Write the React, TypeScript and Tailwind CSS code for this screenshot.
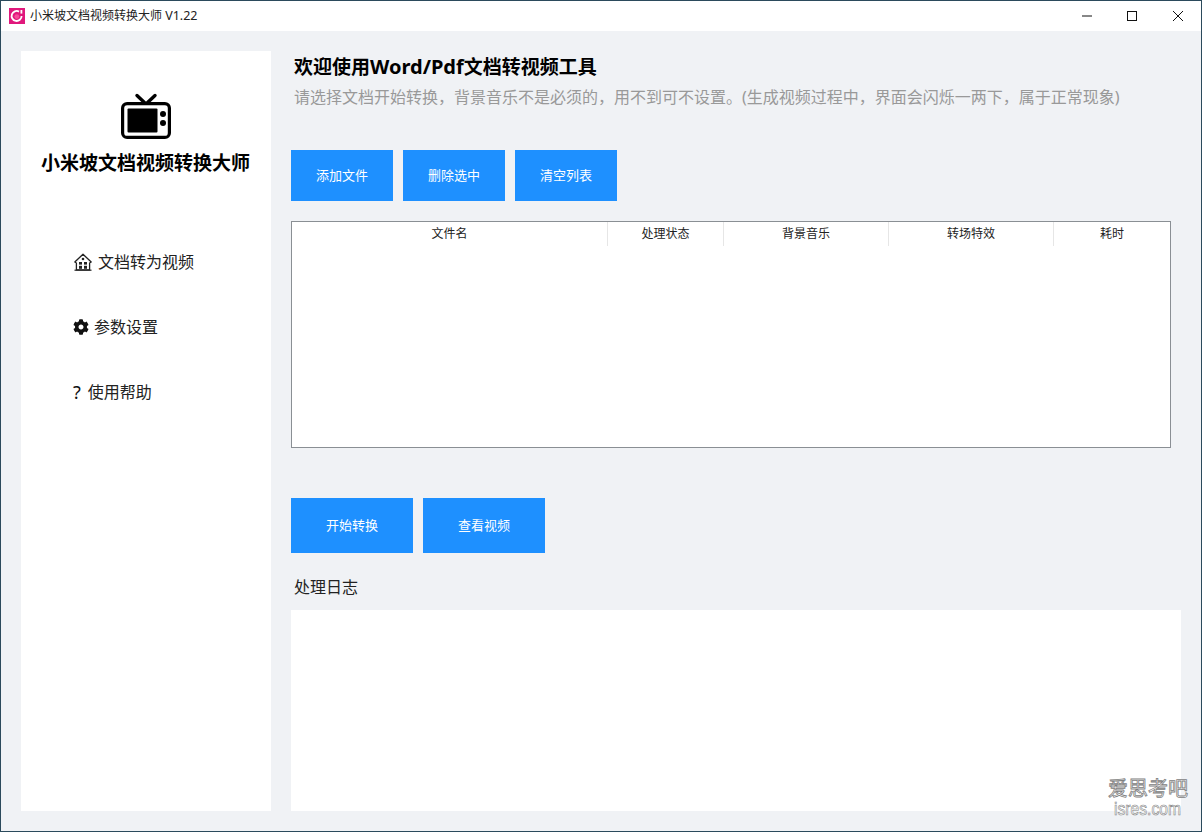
import React from "react";
import { FaCog } from "react-icons/fa";

const font = "[font-family:'Noto_Sans','Noto_Sans_CJK_SC',sans-serif]";

function Logo() {
  return (
    <svg width="16" height="16" viewBox="0 0 16 16" className="shrink-0">
      <rect width="16" height="16" fill="#e0187c" />
      <path d="M10 3.6 A5 5 0 1 0 12.6 8" fill="none" stroke="#fff" strokeWidth="1.8" />
      <circle cx="7.8" cy="8.6" r="2.4" fill="#f74a9a" />
      <path d="M12.4 2v3.6" stroke="#fff" strokeWidth="1.8" />
    </svg>
  );
}

function Tv() {
  return (
    <svg width="50" height="46" viewBox="0 0 50 46">
      <path d="M16 2.5 L25 11 L34 2.5" fill="none" stroke="#000" strokeWidth="3.4" strokeLinecap="round" strokeLinejoin="round" />
      <rect x="1.6" y="10.6" width="46.8" height="33.8" rx="4.5" fill="#fff" stroke="#000" strokeWidth="3.2" />
      <rect x="6.5" y="15.5" width="30" height="24" rx="1" fill="#000" />
      <circle cx="42" cy="21" r="3" fill="#000" />
      <circle cx="42" cy="30" r="3" fill="#000" />
    </svg>
  );
}

function House() {
  return (
    <svg width="18" height="18" viewBox="0 0 18 18" className="shrink-0">
      <path d="M9 1.2 L17.2 9 L15.6 10 L15.6 16.8 H2.4 V10 L0.8 9 Z" fill="#fff" stroke="#222" strokeWidth="1.3" strokeLinejoin="round" />
      <circle cx="9" cy="6" r="1.3" fill="#222" />
      <rect x="5" y="9" width="3" height="2.6" fill="#222" />
      <rect x="10" y="9" width="3" height="2.6" fill="#222" />
      <rect x="5" y="12.8" width="3" height="3" fill="#222" />
      <rect x="10" y="12.8" width="3" height="3" fill="#222" />
      <path d="M0.5 17.2h17" stroke="#222" strokeWidth="1.2" />
    </svg>
  );
}

function Btn({ label, w, h }: { label: string; w: string; h: string }) {
  return (
    <button className={`${w} ${h} bg-[#1e90ff] text-white text-[13px] flex items-center justify-center`}>
      {label}
    </button>
  );
}

const cols: [string, string][] = [
  ["文件名", "w-[316px]"],
  ["处理状态", "w-[116px]"],
  ["背景音乐", "w-[165px]"],
  ["转场特效", "w-[165px]"],
  ["耗时", "w-[116px]"],
];

export default function App() {
  return (
    <div className={`relative w-[1202px] h-[832px] flex flex-col overflow-hidden bg-[#f0f2f5] border border-[#2b4a5c] ${font}`}>
      <header className="h-[30px] shrink-0 bg-white flex items-center pl-2 text-[12px] text-[#222]">
        <Logo />
        <span className="ml-[5px]">小米坡文档视频转换大师 <span className="text-[12.5px]">V1.22</span></span>
        <div className="ml-auto flex items-center">
          <svg width="46" height="30" viewBox="0 0 46 30">
            <path d="M19 15h10" stroke="#111" strokeWidth="1" />
          </svg>
          <svg width="46" height="30" viewBox="0 0 46 30">
            <rect x="18.5" y="10.5" width="9" height="9" fill="none" stroke="#111" strokeWidth="1" />
          </svg>
          <svg width="46" height="30" viewBox="0 0 46 30">
            <path d="M18 10l10 10M28 10l-10 10" stroke="#111" strokeWidth="1" />
          </svg>
        </div>
      </header>
      <div className="flex-1 flex pl-5 pt-5 pb-5 pr-5 gap-5 min-h-0">
        <aside className="w-[250px] shrink-0 bg-white flex flex-col">
          <div className="flex justify-center pt-[42px]">
            <Tv />
          </div>
          <h1 className="mt-[10px] pr-px text-center text-[19px] font-bold text-black leading-[28px]">小米坡文档视频转换大师</h1>
          <nav className="mt-[73px] pl-[52px] flex flex-col text-[16px] text-[#222] gap-[41px]">
            <div className="flex items-center h-6 gap-[6px]"><span className="ml-px"><House /></span>文档转为视频</div>
            <div className="flex items-center h-6 gap-[5px]"><FaCog className="text-[16px] text-[#111]" />参数设置</div>
            <div className="flex items-center h-6 gap-[7px]"><span className="text-[18px] text-[#111] leading-none">?</span>使用帮助</div>
          </nav>
        </aside>
        <main className="flex-1 flex flex-col min-w-0">
          <div className="pl-[3px] pt-[2px]">
            <h2 className="text-[19px] font-bold text-black leading-[28px]">欢迎使用<span className="text-[20px]">Word/Pdf</span>文档转视频工具</h2>
            <p className="text-[16px] text-[#999] leading-[24px] mt-[4px] whitespace-nowrap">请选择文档开始转换，背景音乐不是必须的，用不到可不设置。(生成视频过程中，界面会闪烁一两下，属于正常现象)</p>
          </div>
          <div className="flex gap-[10px] mt-[41px]">
            <Btn label="添加文件" w="w-[102px]" h="h-[51px]" />
            <Btn label="删除选中" w="w-[102px]" h="h-[51px]" />
            <Btn label="清空列表" w="w-[102px]" h="h-[51px]" />
          </div>
          <div className="mt-5 w-[880px] h-[227px] bg-white border border-[#8a8f94]">
            <div className="flex h-6 text-[12px] text-[#222]">
              {cols.map(([t, w], i) => (
                <div key={t} className={`${w} ${i < 4 ? "border-r border-[#e6e6e6]" : ""} flex items-center justify-center shrink-0`}>{t}</div>
              ))}
            </div>
          </div>
          <div className="flex gap-[10px] mt-[50px]">
            <Btn label="开始转换" w="w-[122px]" h="h-[55px]" />
            <Btn label="查看视频" w="w-[122px]" h="h-[55px]" />
          </div>
          <div className="mt-[22px] pl-[3px] text-[16px] text-[#222] leading-[24px]">处理日志</div>
          <div className="mt-[11px] flex-1 bg-white" />
        </main>
      </div>
      <div className="absolute right-[13px] bottom-[13px] flex flex-col items-center text-white">
        <span className="text-[20px] leading-[23px] [-webkit-text-stroke:0.8px_#808080]">爱思考吧</span>
        <span className="text-[18px] leading-[18px] scale-x-[0.87] [font-family:'Liberation_Sans',sans-serif] [-webkit-text-stroke:0.6px_#808080]">isres.com</span>
      </div>
    </div>
  );
}
